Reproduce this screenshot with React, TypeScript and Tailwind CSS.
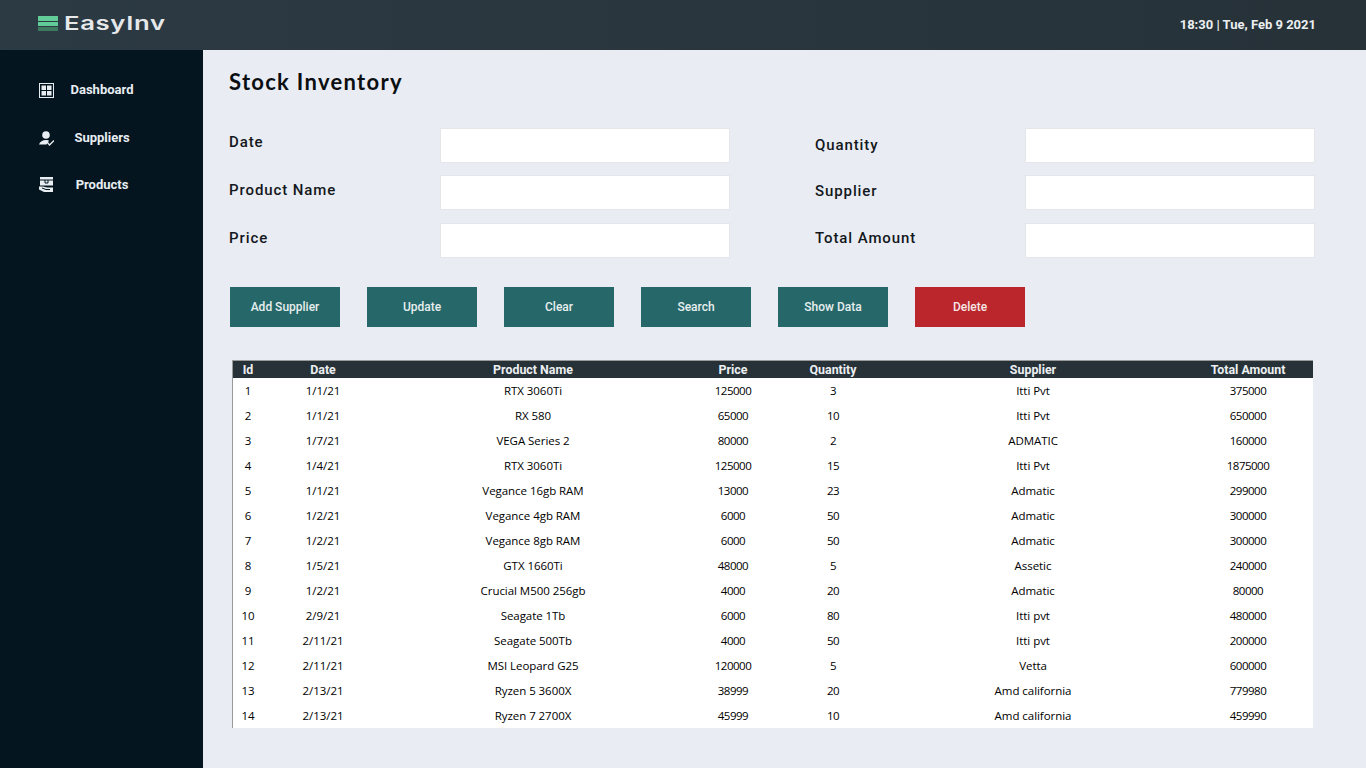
const rows = [
  ["1", "1/1/21", "RTX 3060Ti", "125000", "3", "Itti Pvt", "375000"],
  ["2", "1/1/21", "RX 580", "65000", "10", "Itti Pvt", "650000"],
  ["3", "1/7/21", "VEGA Series 2", "80000", "2", "ADMATIC", "160000"],
  ["4", "1/4/21", "RTX 3060Ti", "125000", "15", "Itti Pvt", "1875000"],
  ["5", "1/1/21", "Vegance 16gb RAM", "13000", "23", "Admatic", "299000"],
  ["6", "1/2/21", "Vegance 4gb RAM", "6000", "50", "Admatic", "300000"],
  ["7", "1/2/21", "Vegance 8gb RAM", "6000", "50", "Admatic", "300000"],
  ["8", "1/5/21", "GTX 1660Ti", "48000", "5", "Assetic", "240000"],
  ["9", "1/2/21", "Crucial M500 256gb", "4000", "20", "Admatic", "80000"],
  ["10", "2/9/21", "Seagate 1Tb", "6000", "80", "Itti pvt", "480000"],
  ["11", "2/11/21", "Seagate 500Tb", "4000", "50", "Itti pvt", "200000"],
  ["12", "2/11/21", "MSI Leopard G25", "120000", "5", "Vetta", "600000"],
  ["13", "2/13/21", "Ryzen 5 3600X", "38999", "20", "Amd california", "779980"],
  ["14", "2/13/21", "Ryzen 7 2700X", "45999", "10", "Amd california", "459990"],
];

const DashboardIcon = () => (
  <svg width="15" height="15" viewBox="0 0 15 15">
    <rect x="0.5" y="0.5" width="14" height="14" fill="none" stroke="#e8edf2" />
    <rect x="2.5" y="2.5" width="4.5" height="4.5" fill="#e8edf2" />
    <rect x="8" y="2.5" width="4.5" height="4.5" fill="#e8edf2" />
    <rect x="2.5" y="8" width="4.5" height="4.5" fill="#e8edf2" />
    <rect x="8" y="8" width="4.5" height="4.5" fill="#e8edf2" />
  </svg>
);

const SupplierIcon = () => (
  <svg width="15" height="15" viewBox="0 0 15 15">
    <circle cx="7" cy="4" r="3.8" fill="#e8edf2" />
    <path d="M0 13.5 C1 10.5 3.5 9 7 9 C8.5 9 9.5 9.3 10 9.8 L7.5 13.5 Z" fill="#e8edf2" />
    <path d="M8 11 L10.5 14 L15 9.5" fill="none" stroke="#e8edf2" strokeWidth="1.3" />
  </svg>
);

const ProductIcon = () => (
  <svg width="15" height="15" viewBox="0 0 15 15">
    <path d="M1 0 H14 V8.5 H1 Z" fill="#e8edf2" />
    <path d="M1 3 H14 M6 3 V6 H9 V3" stroke="#04151f" strokeWidth="1" fill="none" />
    <path d="M0 9.5 H4 L8 10.5 H14 V15 H5 L0 12.5 Z" fill="#e8edf2" />
    <path d="M3 11 L7 12.5 H11" stroke="#04151f" strokeWidth="1" fill="none" />
  </svg>
);

const Field = ({ label, labelClass }: { label: string; labelClass: string }) => (
  <div className="flex h-[35px] items-start">
    <label className={`shrink-0 text-[15px] leading-[18px] font-medium tracking-[0.9px] text-[#14171c] ${labelClass}`}>{label}</label>
    <input className="h-[35px] w-[290px] border border-[#e4e6ea] bg-white" />
  </div>
);

const NavItem = ({ icon, label, height }: { icon: React.ReactNode; label: string; height: string }) => (
  <div className={`flex items-center pl-[39px] pr-[53px] ${height}`}>
    {icon}
    <span className="flex-1 text-center text-[13px] font-bold text-[#e8edf2]">{label}</span>
  </div>
);

const buttons = ["Add Supplier", "Update", "Clear", "Search", "Show Data"];
const numeric = [3, 4, 6];

export default function App() {
  return (
    <div className="flex h-[768px] w-[1366px] flex-col overflow-hidden bg-[#e9edf3] font-['Roboto',sans-serif]">
      <header className="flex h-[50px] shrink-0 items-center justify-between bg-gradient-to-r from-[#2c3a44] to-[#263238] pl-[38px] pr-[50px]">
        <div className="flex items-center gap-[6px] pb-[3px]">
          <div className="flex w-[20px] flex-col gap-[0.5px]">
            <div className="h-[5px] bg-[#62cc98]" />
            <div className="h-[4.5px] bg-[#62cc98]" />
            <div className="h-[4px] bg-[#3d7a60]" />
          </div>
          <span className="origin-left scale-x-[1.35] font-['Inter',sans-serif] text-[19px] leading-none font-semibold tracking-[0.5px] text-[#e6e8ea]">EasyInv</span>
        </div>
        <span className="text-[13px] font-bold text-[#eceff1]">18:30 | Tue, Feb 9 2021</span>
      </header>

      <div className="flex min-h-0 flex-1">
        <aside className="w-[203px] shrink-0 bg-[#04151f] pt-[16px]">
          <NavItem icon={<DashboardIcon />} label="Dashboard" height="h-[48px]" />
          <NavItem icon={<SupplierIcon />} label="Suppliers" height="h-[48px]" />
          <NavItem icon={<ProductIcon />} label="Products" height="h-[45px]" />
        </aside>

        <main className="flex-1 pl-[26px] pt-[17px]">
          <h1 className="font-['Lato',sans-serif] text-[22px] leading-[30px] font-bold tracking-[1.3px] text-[#0c0f12]">Stock Inventory</h1>

          <div className="mt-[31px] flex">
            <div className="flex flex-col">
              <Field label="Date" labelClass="w-[211px] pt-[5px]" />
              <div className="mt-[12px]">
                <Field label="Product Name" labelClass="w-[211px] pt-[6px]" />
              </div>
              <div className="mt-[13px]">
                <Field label="Price" labelClass="w-[211px] pt-[6px]" />
              </div>
            </div>
            <div className="ml-[85px] flex flex-col">
              <Field label="Quantity" labelClass="w-[210px] pt-[8px]" />
              <div className="mt-[12px]">
                <Field label="Supplier" labelClass="w-[210px] pt-[7px]" />
              </div>
              <div className="mt-[13px]">
                <Field label="Total Amount" labelClass="w-[210px] pt-[6px]" />
              </div>
            </div>
          </div>

          <div className="ml-[1px] mt-[29px] flex gap-[27px]">
            {buttons.map((b) => (
              <button key={b} className="h-[40px] w-[110px] bg-[#26686a] text-[12px] font-medium text-[#e6eeee]">{b}</button>
            ))}
            <button className="h-[40px] w-[110px] bg-[#bb262d] text-[12px] font-medium text-[#f5e6e6]">Delete</button>
          </div>

          <div className="ml-[3px] mt-[33px] w-[1081px] border-l border-t border-[#9a9a9a] bg-white">
            <table className="w-[1080px] table-fixed border-collapse">
              <thead>
                <tr className="h-[17px] bg-[#263238] text-[12.4px] leading-[17px] font-bold text-[#eceff1]">
                  <th className="w-[30px] font-bold">Id</th>
                  <th className="w-[120px] font-bold">Date</th>
                  <th className="w-[300px] font-bold">Product Name</th>
                  <th className="w-[100px] font-bold">Price</th>
                  <th className="w-[100px] font-bold">Quantity</th>
                  <th className="w-[300px] font-bold">Supplier</th>
                  <th className="w-[130px] font-bold">Total Amount</th>
                </tr>
              </thead>
              <tbody className="font-['Open_Sans',sans-serif] text-[11.5px] tracking-[-0.05px] text-black">
                {rows.map((r) => (
                  <tr key={r[0]} className="h-[25px]">
                    {r.map((c, i) => (
                      <td key={i} className={`p-0 text-center leading-[25px] ${numeric.includes(i) ? "tracking-[-0.5px]" : ""}`}>{c}</td>
                    ))}
                  </tr>
                ))}
              </tbody>
            </table>
          </div>
        </main>
      </div>
    </div>
  );
}
